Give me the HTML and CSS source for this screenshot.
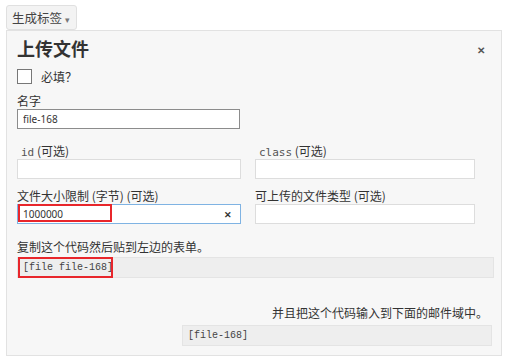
FILE: index.html
```html
<!DOCTYPE html>
<html lang="zh-CN">
<head>
  <meta charset="UTF-8">
  <title>上传文件</title>
  <link rel="stylesheet" href="styles.css">
</head>
<body>
  <button class="tag-btn">生成标签 <span class="caret">▾</span></button>

  <div class="panel">
    <div class="panel-head">
      <h2>上传文件</h2>
      <span class="close">✕</span>
    </div>

    <label class="check"><span class="box"></span>必填？</label>

    <div class="field">
      <label>名字</label>
      <input class="name-input" type="text" value="file-168">
    </div>

    <div class="grid">
      <div class="field">
        <label class="opt"><code>id</code> (可选)</label>
        <input type="text">
      </div>
      <div class="field">
        <label class="opt"><code>class</code> (可选)</label>
        <input type="text">
      </div>
      <div class="field">
        <label>文件大小限制 (字节) (可选)</label>
        <div class="focus-wrap">
          <input class="focused" type="text" value="1000000">
          <span class="mark small"></span>
          <span class="clear">✕</span>
        </div>
      </div>
      <div class="field">
        <label>可上传的文件类型 (可选)</label>
        <input type="text">
      </div>
    </div>

    <p class="hint">复制这个代码然后贴到左边的表单。</p>
    <div class="code-wrap">
      <input class="code" type="text" value="[file file-168]" readonly>
      <span class="mark code-mark"></span>
    </div>

    <p class="hint right">并且把这个代码输入到下面的邮件域中。</p>
    <div class="mail-row">
      <input class="code mail" type="text" value="[file-168]" readonly>
    </div>
  </div>
</body>
</html>
```

FILE: styles.css
```css
body {
  margin: 0;
  padding: 5px 8px 0 6px;
  background: #fff;
  font-family: "Noto Sans CJK SC", "Noto Sans", sans-serif;
  font-size: 12px;
  color: #333;
}
.tag-btn {
  display: block;
  height: 25px;
  padding: 0 6px 0 5px;
  border: 1px solid #e0e0e0;
  border-radius: 3px;
  background: #f3f3f3;
  font-family: inherit;
  font-size: 12.5px;
  color: #444;
}
.caret {
  font-size: 9px;
  color: #777;
}
.panel {
  box-sizing: border-box;
  width: 496px;
  height: 326px;
  padding: 4px 9px 0 10px;
  border: 1px solid #e2e2e2;
  background: #f7f7f7;
}
.panel-head {
  display: flex;
  justify-content: space-between;
  align-items: center;
  height: 26px;
}
.panel-head h2 {
  margin: 0;
  font-size: 18px;
  font-weight: bold;
  color: #333;
}
.close {
  margin: 2px 7px 0 0;
  font-size: 10px;
  font-weight: bold;
  color: #555;
}
.check {
  display: flex;
  align-items: center;
  gap: 9px;
  margin-top: 7px;
  height: 16px;
  color: #333;
}
.box {
  width: 13px;
  height: 13px;
  border: 1px solid #777;
  background: #fff;
}
.field {
  margin-top: 8px;
}
.field label {
  display: block;
  height: 17px;
  line-height: 17px;
}
input {
  box-sizing: border-box;
  display: block;
  height: 20px;
  margin: 0;
  padding: 0 5px;
  border: 1px solid #ddd;
  background: #fff;
  font-family: "Noto Sans", sans-serif;
  font-size: 10px;
  color: #333;
  outline: none;
}
.name-input {
  width: 223px;
  border-color: #8c8c8c;
}
.grid {
  display: grid;
  grid-template-columns: 238px 220px;
  margin-top: 13px;
}
.grid input {
  width: 224px;
}
.grid .field:nth-child(2n) input {
  width: 220px;
}
.grid .field:nth-child(-n+2) {
  margin-top: 0;
}
.opt {
  padding-left: 4px;
}
.opt code {
  font-family: "DejaVu Sans Mono", monospace;
  font-size: 11px;
  color: #555;
}
.focus-wrap, .code-wrap {
  position: relative;
}
.focused {
  border-color: #7fb3e3;
}
.clear {
  position: absolute;
  left: 207px;
  top: 4px;
  font-size: 9px;
  font-weight: bold;
  color: #333;
}
.mark {
  position: absolute;
  border: 2px solid #e8262b;
}
.small {
  left: 1px;
  top: 0;
  width: 90px;
  height: 14px;
}
.hint {
  margin: 15px 0 2px;
  line-height: 16px;
  color: #333;
}
.hint.right {
  margin-top: 27px;
  padding-right: 4px;
  text-align: right;
}
.code {
  width: 477px;
  height: 21px;
  border: 1px solid #e4e4e4;
  background: #eeeeee;
  font-family: "Liberation Mono", monospace;
  font-size: 10px;
  color: #444;
}
.code-mark {
  left: 1px;
  top: 0;
  width: 91px;
  height: 17px;
}
.mail-row {
  display: flex;
  justify-content: flex-end;
  margin-top: 4px;
}
.code.mail {
  width: 310px;
}
```
